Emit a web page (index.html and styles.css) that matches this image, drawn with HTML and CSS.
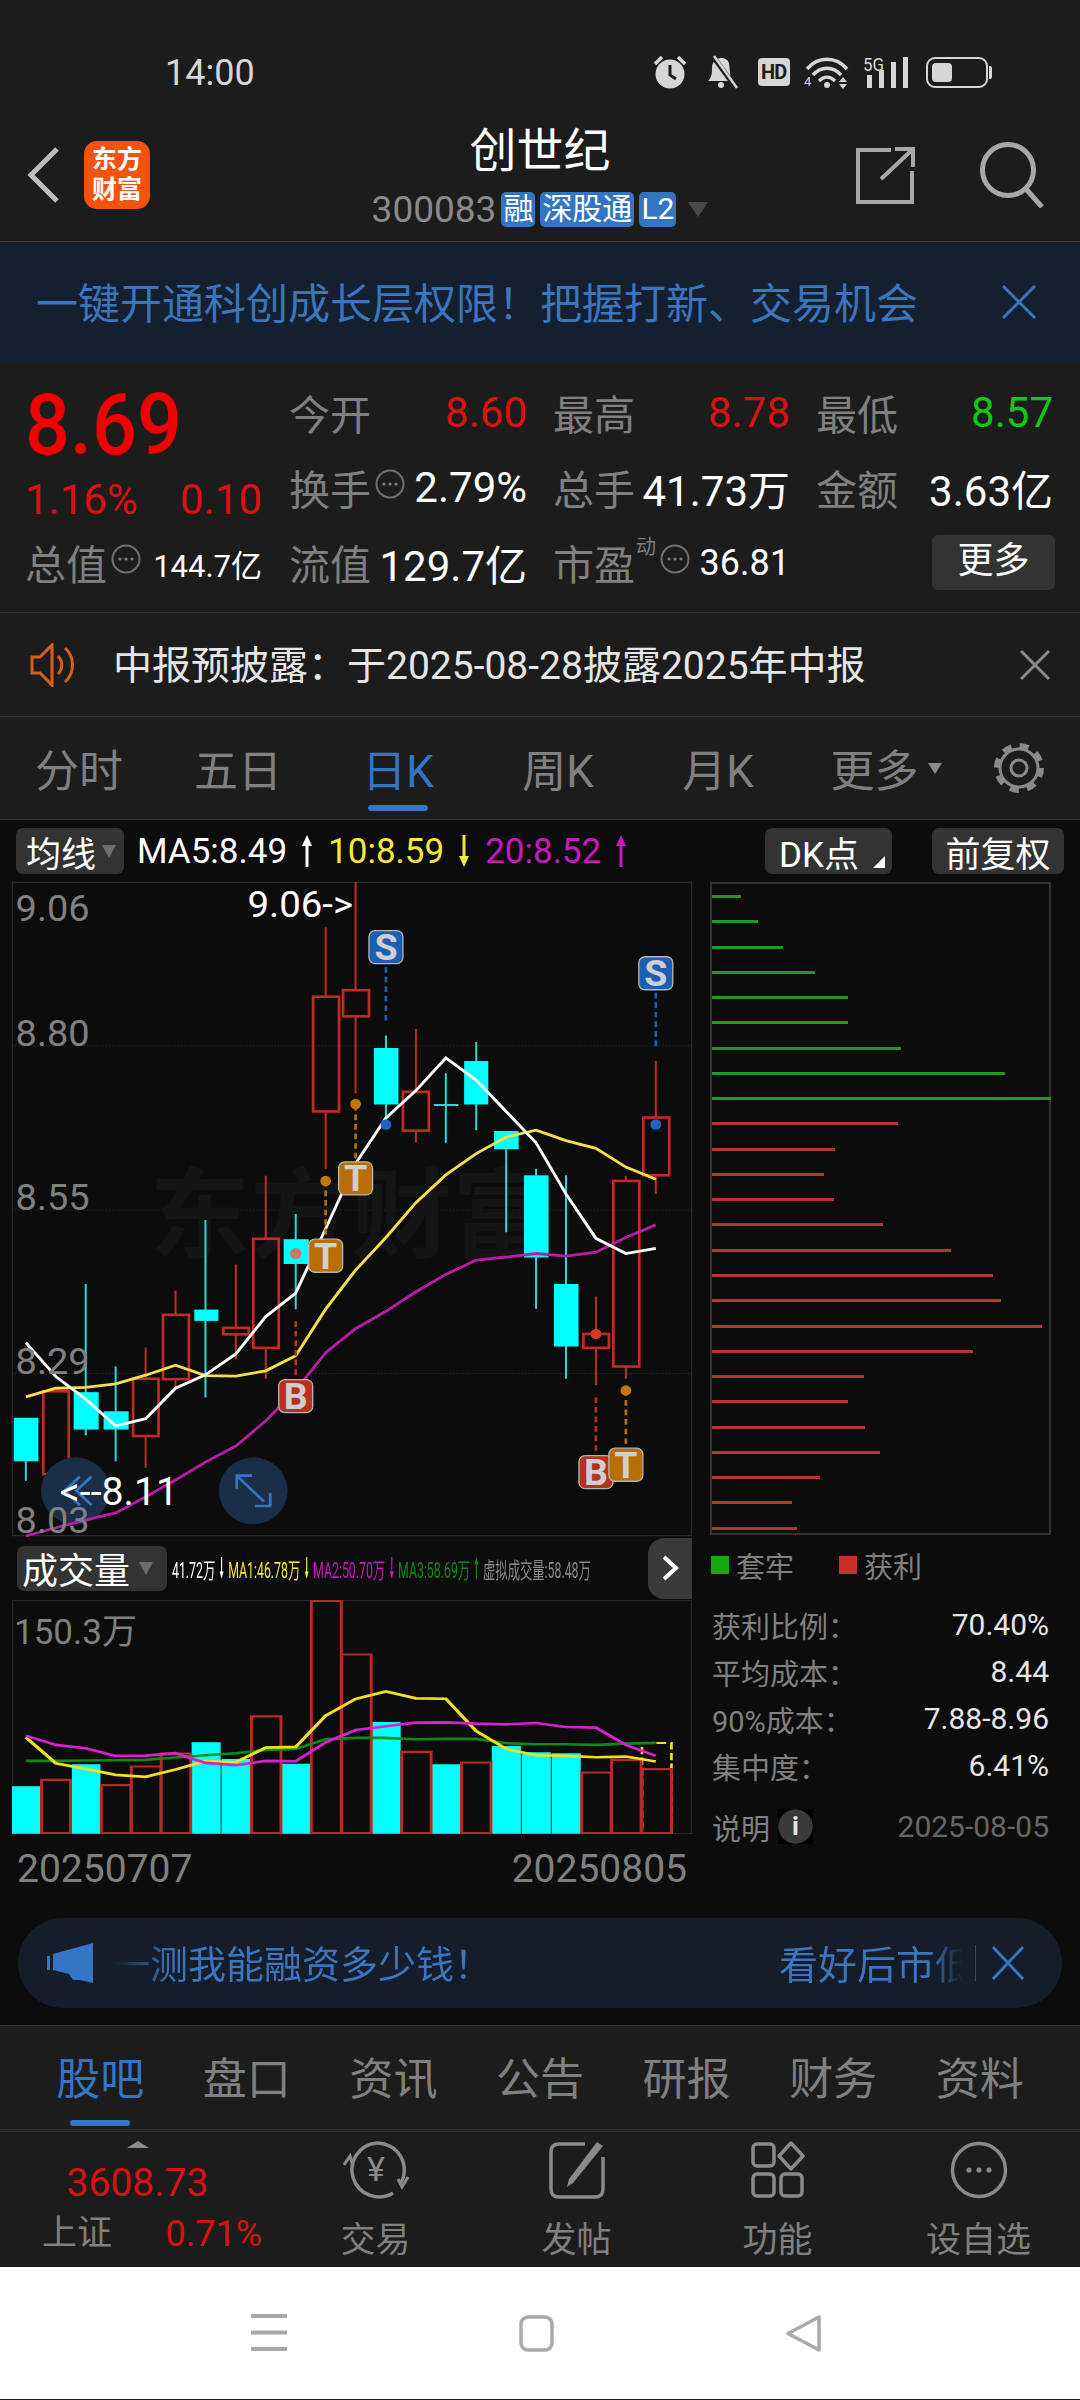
FILE: index.html
```html
<!DOCTYPE html>
<html lang="zh-CN">
<head>
    <meta charset="utf-8">
    <title>创世纪 300083</title>
    <link rel="stylesheet" href="styles.css">
</head>
<body>
    <svg class="defs" width="0" height="0">
        <symbol id="dots" viewBox="0 0 30 30">
            <circle cx="15" cy="15" r="13.5" fill="none" stroke="#707070" stroke-width="2"/>
            <circle cx="9" cy="15" r="1.6" fill="#808080"/>
            <circle cx="15" cy="15" r="1.6" fill="#808080"/>
            <circle cx="21" cy="15" r="1.6" fill="#808080"/>
        </symbol>
        <symbol id="arr-up" viewBox="0 0 12 32">
            <path d="M6 32V6" stroke="currentColor" stroke-width="3"/>
            <path d="M6 0L1 11H11Z" fill="currentColor"/>
        </symbol>
        <symbol id="arr-down" viewBox="0 0 12 32">
            <path d="M6 0V26" stroke="currentColor" stroke-width="3"/>
            <path d="M6 32L1 21H11Z" fill="currentColor"/>
        </symbol>
    </svg>

    <!-- 状态栏 -->
    <div class="status">
        <span class="clock">14:00</span>
        <div class="status-icons">
            <svg class="s-alarm" width="32" height="34" viewBox="0 0 32 34">
                <circle cx="16" cy="19" r="14.5" fill="#d6d6d6"/>
                <path d="M16 10V20L22 24" fill="none" stroke="#1c1c1c" stroke-width="3"/>
                <path d="M1 9L8 2M31 9L24 2" stroke="#d6d6d6" stroke-width="3.5"/>
            </svg>
            <svg class="s-bell" width="32" height="34" viewBox="0 0 32 34">
                <path d="M2 26C6 22 6 18 6 13C6 7 10 3 15 3C19 3 22 5 23 8L25 26Z" fill="#d6d6d6"/>
                <circle cx="15" cy="30" r="3" fill="#d6d6d6"/>
                <path d="M6 0L30 33" stroke="#1c1c1c" stroke-width="5"/>
                <path d="M8 1L31 33" stroke="#d6d6d6" stroke-width="2.5"/>
            </svg>
            <div class="s-hd">HD</div>
            <svg class="s-wifi" width="46" height="34" viewBox="0 0 46 34">
                <path d="M3 14C14 1 32 1 43 14M9 20C17 11 29 11 37 20M15 26C20 21 26 21 31 26" fill="none" stroke="#d6d6d6" stroke-width="3.5"/>
                <circle cx="23" cy="30" r="3" fill="#d6d6d6"/>
                <path d="M35 27L39 22L43 27ZM35 29L39 34L43 29Z" fill="#d6d6d6"/>
                <text x="0" y="31" class="s-tiny s-four">4</text>
            </svg>
            <svg class="s-signal" width="47" height="34" viewBox="0 0 47 34">
                <text x="0" y="16" class="s-tiny" textLength="21" lengthAdjust="spacingAndGlyphs">5G</text>
                <path d="M4 20H9V33H4ZM16 15H21V33H16ZM28 7H33V33H28ZM40 2H45V33H40Z" fill="#d6d6d6"/>
            </svg>
            <div class="s-batt"><i></i></div>
        </div>
    </div>

    <!-- 顶部标题 -->
    <div class="header">
        <div class="h-left">
            <svg width="32" height="56" viewBox="0 0 32 56">
                <path d="M30 2L4 28L30 54" fill="none" stroke="#bdbdbd" stroke-width="5"/>
            </svg>
            <div class="logo">东方<br>财富</div>
        </div>
        <div class="h-mid">
            <div class="h-title">创世纪</div>
            <div class="h-sub">
                <span class="h-code">300083</span>
                <span class="tag">融</span>
                <span class="tag">深股通</span>
                <span class="tag">L2</span>
                <i class="h-tri"></i>
            </div>
        </div>
        <div class="h-right">
            <svg width="60" height="60" viewBox="0 0 60 60">
                <path d="M36 5H3V57H57V26" fill="none" stroke="#a8a8a8" stroke-width="4"/>
                <path d="M26 34L57 5M40 4H58V22" fill="none" stroke="#a8a8a8" stroke-width="4"/>
            </svg>
            <svg width="64" height="66" viewBox="0 0 64 66">
                <circle cx="28" cy="28" r="25.5" fill="none" stroke="#a8a8a8" stroke-width="5"/>
                <path d="M46 47L62 65" stroke="#a8a8a8" stroke-width="5"/>
            </svg>
        </div>
    </div>

    <div class="banner">
        <span class="banner-text">一键开通科创成长层权限！把握打新、交易机会</span>
        <svg width="36" height="34" viewBox="0 0 36 34">
            <path d="M2 1L34 33M34 1L2 33" stroke="#3a75bd" stroke-width="3"/>
        </svg>
    </div>

    <!-- 行情数据 -->
    <div class="quote">
        <div class="q-left">
            <div class="q-price">8.69</div>
            <div class="q-change"><span>1.16%</span><span>0.10</span></div>
            <div class="q-total">
                <span class="lbl">总值</span>
                <svg class="dot-ic"><use href="#dots"/></svg>
                <span class="val-s">144.7亿</span>
            </div>
        </div>
        <div class="q-grid">
            <div class="cell"><span class="lbl">今开</span><span class="val red">8.60</span></div>
            <div class="cell"><span class="lbl">最高</span><span class="val red">8.78</span></div>
            <div class="cell"><span class="lbl">最低</span><span class="val green">8.57</span></div>
            <div class="cell"><span class="lbl">换手</span><svg class="dot-ic"><use href="#dots"/></svg><span class="val push">2.79%</span></div>
            <div class="cell"><span class="lbl">总手</span><span class="val">41.73万</span></div>
            <div class="cell"><span class="lbl">金额</span><span class="val">3.63亿</span></div>
            <div class="cell"><span class="lbl">流值</span><span class="val">129.7亿</span></div>
            <div class="cell"><span class="lbl">市盈</span><sup class="q-dyn">动</sup><svg class="dot-ic"><use href="#dots"/></svg><span class="val val-pe push">36.81</span></div>
            <div class="cell cell-end"><span class="more-btn">更多</span></div>
        </div>
    </div>

    <div class="notice">
        <svg width="50" height="44" viewBox="0 0 50 44">
            <path d="M2 14H10L22 2V42L10 30H2Z" fill="none" stroke="#d95d1b" stroke-width="3"/>
            <path d="M28 13C33 18 33 26 28 31M35 5C45 14 45 30 35 39" fill="none" stroke="#d95d1b" stroke-width="3"/>
        </svg>
        <span class="notice-text">中报预披露：于2025-08-28披露2025年中报</span>
        <svg class="notice-x" width="30" height="30" viewBox="0 0 30 30">
            <path d="M1 1L29 29M29 1L1 29" stroke="#8a8a8a" stroke-width="3"/>
        </svg>
    </div>

    <div class="tabs">
        <div class="tab">分时</div>
        <div class="tab">五日</div>
        <div class="tab on">日K</div>
        <div class="tab">周K</div>
        <div class="tab">月K</div>
        <div class="tab tab-more">更多<i class="tab-tri"></i></div>
        <div class="tab">
            <svg width="54" height="54" viewBox="0 0 54 54">
                <circle cx="27" cy="27" r="22" fill="none" stroke="#8a8a8a" stroke-width="6" stroke-dasharray="9 8.28"/>
                <circle cx="27" cy="27" r="19" fill="none" stroke="#8a8a8a" stroke-width="3"/>
                <circle cx="27" cy="27" r="8" fill="none" stroke="#8a8a8a" stroke-width="3"/>
            </svg>
        </div>
    </div>

    <!-- K线区域 -->
    <div class="board">
        <div class="ma-row">
            <div class="chip chip-ma">均线<i class="chip-tri"></i></div>
            <span class="ma-item">MA5:8.49<svg class="arr"><use href="#arr-up"/></svg></span>
            <span class="ma-item yellow">10:8.59<svg class="arr"><use href="#arr-down"/></svg></span>
            <span class="ma-item magenta">20:8.52<svg class="arr"><use href="#arr-up"/></svg></span>
            <div class="chip chip-dk">DK点<i class="chip-corner"></i></div>
            <div class="chip chip-fq">前复权</div>
        </div>

        <div class="columns">
            <div class="col-left">
                <svg class="kline" viewBox="28 32 1522 1505" preserveAspectRatio="none">
                    <rect class="frame" x="29" y="33" width="1520" height="1503"/>
                    <path class="grid-line" d="M28 409H1550M28 787H1550M28 1163H1550"/>
                    <text class="watermark" x="335" y="880">东方财富</text>

                    <path class="wick-c" d="M59 1365V1410M193 957V1305M260 1147V1365M461 810V1218M663 796V1015M865 385V590M999 472V632M1067 400V603M1134 647V838M1201 692V1014M1268 707V1175M972 545H1027"/>
                    <path class="wick-r" d="M126 1395V1422M327 1103V1175M327 1307V1380M394 972V1028M394 1176V1195M529 912V1058M529 1073V1130M596 708V853M596 1104V1175M730 136V296M730 560V692M797 32V281M797 341V518M932 370V515M932 604V632M1335 986V1072M1335 1104V1190M1402 708V720M1402 1147V1175M1469 444V574M1469 707V750"/>

                    <rect class="c-fall" x="32" y="1265" width="55" height="100"/>
                    <rect class="c-fall" x="166" y="1206" width="56" height="86"/>
                    <rect class="c-fall" x="233" y="1250" width="56" height="42"/>
                    <rect class="c-fall" x="436" y="1016" width="54" height="26"/>
                    <rect class="c-fall" x="636" y="854" width="56" height="57"/>
                    <rect class="c-fall" x="838" y="414" width="55" height="130"/>
                    <rect class="c-fall" x="1040" y="444" width="54" height="100"/>
                    <rect class="c-fall" x="1107" y="605" width="55" height="42"/>
                    <rect class="c-fall" x="1174" y="707" width="55" height="189"/>
                    <rect class="c-fall" x="1241" y="957" width="55" height="144"/>

                    <rect class="c-rise" x="98" y="1204" width="57" height="191"/>
                    <rect class="c-rise" x="299" y="1175" width="57" height="132"/>
                    <rect class="c-rise" x="366" y="1028" width="58" height="148"/>
                    <rect class="c-rise" x="501" y="1058" width="57" height="15"/>
                    <rect class="c-rise" x="568" y="853" width="57" height="251"/>
                    <rect class="c-rise" x="702" y="296" width="58" height="264"/>
                    <rect class="c-rise" x="769" y="281" width="58" height="60"/>
                    <rect class="c-rise" x="903" y="515" width="58" height="89"/>
                    <rect class="c-rise" x="1307" y="1072" width="57" height="32"/>
                    <rect class="c-rise" x="1374" y="720" width="58" height="427"/>
                    <rect class="c-rise" x="1441" y="574" width="58" height="133"/>

                    <!-- 悬浮按钮 -->
                    <circle class="fab" cx="170" cy="1433" r="77"/>
                    <path class="fab-ic" d="M180 1400L146 1433L180 1466M206 1400L172 1433L206 1466"/>
                    <circle class="fab" cx="568" cy="1433" r="77"/>
                    <path class="fab-ic" d="M531 1398L592 1458M531 1428V1398H565M606 1438V1468H572"/>

                    <polyline class="ln ln-m" points="59,1537 126,1518 193,1500 260,1484 327,1447 394,1408 461,1367 529,1330 596,1272 663,1202 730,1115 797,1060 865,1020 932,975 999,935 1067,902 1134,895 1201,887 1268,893 1335,884 1402,850 1469,821"/>
                    <polyline class="ln ln-y" points="59,1217 126,1197 193,1195 260,1187 327,1167 394,1144 461,1168 529,1169 596,1157 663,1122 730,1015 797,925 865,850 932,770 999,706 1067,657 1134,619 1201,603 1268,627 1335,645 1402,688 1469,716"/>
                    <polyline class="ln ln-w" points="59,1092 126,1170 193,1222 260,1284 327,1267 394,1197 461,1166 529,1118 596,1032 663,978 730,830 797,680 865,575 932,512 999,437 1067,488 1134,560 1201,632 1268,750 1335,852 1402,887 1469,875"/>

                    <text class="axis" x="36" y="122">9.06</text>
                    <text class="axis" x="36" y="409">8.80</text>
                    <text class="axis" x="36" y="786">8.55</text>
                    <text class="axis" x="36" y="1164">8.29</text>
                    <text class="axis" x="36" y="1530">8.03</text>
                    <text class="peak" x="555" y="112">9.06-&gt;</text>
                    <text class="low" x="135" y="1465">&lt;--8.11</text>

                    <!-- 买卖点 -->
                    <path class="dash dash-b" d="M865 228V355M1469 287V415"/>
                    <path class="dash dash-o" d="M797 545V672M730 720V850M1402 1202V1330"/>
                    <path class="dash dash-r" d="M663 1043V1170M1335 1218V1345"/>
                    <circle class="pt-b" cx="865" cy="590" r="12"/>
                    <circle class="pt-b" cx="1469" cy="590" r="12"/>
                    <circle class="pt-o" cx="797" cy="543" r="12"/>
                    <circle class="pt-o" cx="730" cy="720" r="12"/>
                    <circle class="pt-o" cx="1402" cy="1202" r="12"/>
                    <circle class="pt-s" cx="663" cy="887" r="13"/>
                    <circle class="pt-r" cx="1335" cy="1072" r="12"/>

                    <rect class="bd bd-s" x="827" y="144" width="76" height="76" rx="14"/>
                    <text class="bd-t" x="865" y="212">S</text>
                    <rect class="bd bd-s" x="1431" y="204" width="76" height="76" rx="14"/>
                    <text class="bd-t" x="1469" y="272">S</text>
                    <rect class="bd bd-t-o" x="759" y="676" width="76" height="76" rx="14"/>
                    <text class="bd-t" x="797" y="744">T</text>
                    <rect class="bd bd-t-o" x="692" y="854" width="76" height="76" rx="14"/>
                    <text class="bd-t" x="730" y="922">T</text>
                    <rect class="bd bd-b-r" x="625" y="1177" width="76" height="76" rx="14"/>
                    <text class="bd-t" x="663" y="1245">B</text>
                    <rect class="bd bd-b-r" x="1297" y="1352" width="76" height="76" rx="14"/>
                    <text class="bd-t" x="1335" y="1420">B</text>
                    <rect class="bd bd-t-o" x="1364" y="1335" width="76" height="76" rx="14"/>
                    <text class="bd-t" x="1402" y="1403">T</text>
                </svg>

                <div class="vol-row">
                    <div class="chip chip-vol">成交量<i class="chip-tri"></i></div>
                    <div class="vol-legend">
                        <div class="vol-inner">
                            <span>41.72万</span><svg class="arr-s"><use href="#arr-down"/></svg>
                            <span class="yellow">MA1:46.78万</span><svg class="arr-s yellow"><use href="#arr-down"/></svg>
                            <span class="magenta">MA2:50.70万</span><svg class="arr-s magenta"><use href="#arr-down"/></svg>
                            <span class="dk-green">MA3:58.69万</span><svg class="arr-s dk-green"><use href="#arr-up"/></svg>
                            <span class="gray">虚拟成交量:58.48万</span>
                        </div>
                    </div>
                    <div class="vol-next">
                        <svg width="18" height="26" viewBox="0 0 18 26">
                            <path d="M3 2L15 13L3 24" fill="none" stroke="#fff" stroke-width="4"/>
                        </svg>
                    </div>
                </div>

                <div class="vol-box">
                    <svg class="vol" viewBox="28 212 1522 704" preserveAspectRatio="none">
                        <rect class="frame" x="29" y="213" width="1520" height="702"/>
                        <path class="vol-fall" d="M28 772H91V915H28ZM162 706H226V915H162ZM430 640H495V915H430ZM497 690H561V915H497ZM632 705H695V915H632ZM834 579H898V915H834ZM968 706H1032V915H968ZM1102 651H1167V915H1102ZM1169 670H1234V915H1169ZM1236 673H1301V915H1236Z"/>
                        <rect class="vol-virt" x="1438" y="642" width="66" height="271"/>
                        <path class="vol-rise" d="M94 753H159V913H94ZM228 769H294V913H228ZM295 713H361V913H295ZM362 674H428V913H362ZM564 562H630V913H564ZM698 215H765V913H698ZM766 376H832V913H766ZM900 669H966V913H900ZM1034 701H1100V913H1034ZM1303 731H1369V913H1303ZM1370 693H1436V913H1370ZM1438 721H1504V913H1438Z"/>
                        <polyline class="vl vl-g" points="59,696 126,696 193,695 260,694 327,693 394,686 461,679 529,673 596,663 663,660 730,631 797,627 865,627 932,631 999,630 1067,630 1134,643 1201,646 1268,646 1335,648 1402,644 1469,642"/>
                        <polyline class="vl vl-y" points="59,625 126,703 193,720 260,738 327,744 394,722 461,697 529,700 596,656 663,654 730,560 797,510 865,487 932,508 999,509 1067,606 1134,660 1201,679 1268,681 1335,685 1402,683 1469,698"/>
                        <polyline class="vl vl-m" points="59,620 126,648 193,658 260,681 327,680 394,673 461,702 529,709 596,696 663,697 730,640 797,603 865,592 932,581 999,580 1067,584 1134,586 1201,582 1268,594 1335,596 1402,648 1469,681"/>
                    </svg>
                    <span class="vol-max">150.3万</span>
                </div>

                <div class="dates"><span>20250707</span><span>20250805</span></div>
            </div>

            <div class="col-right">
                <div class="depth">
                    <i class="g" style="width:29px"></i>
                    <i class="g" style="width:46px"></i>
                    <i class="g" style="width:71px"></i>
                    <i class="g" style="width:103px"></i>
                    <i class="g" style="width:136px"></i>
                    <i class="g" style="width:136px"></i>
                    <i class="g" style="width:189px"></i>
                    <i class="g" style="width:293px"></i>
                    <i class="g" style="width:339px"></i>
                    <i class="r" style="width:186px"></i>
                    <i class="r" style="width:123px"></i>
                    <i class="r" style="width:112px"></i>
                    <i class="r" style="width:122px"></i>
                    <i class="r" style="width:171px"></i>
                    <i class="r" style="width:239px"></i>
                    <i class="r" style="width:281px"></i>
                    <i class="r" style="width:289px"></i>
                    <i class="r" style="width:330px"></i>
                    <i class="r" style="width:261px"></i>
                    <i class="r" style="width:152px"></i>
                    <i class="r" style="width:136px"></i>
                    <i class="r" style="width:153px"></i>
                    <i class="r" style="width:168px"></i>
                    <i class="r" style="width:108px"></i>
                    <i class="r" style="width:80px"></i>
                    <i class="r" style="width:85px"></i>
                </div>
                <div class="legend">
                    <i class="sq sq-g"></i><span>套牢</span>
                    <i class="sq sq-r"></i><span>获利</span>
                </div>
                <div class="stat"><span>获利比例：</span><b>70.40%</b></div>
                <div class="stat"><span>平均成本：</span><b>8.44</b></div>
                <div class="stat"><span>90%成本：</span><b>7.88-8.96</b></div>
                <div class="stat"><span>集中度：</span><b>6.41%</b></div>
                <div class="stat stat-foot">
                    <span>说明</span><span class="info">i</span>
                    <em>2025-08-05</em>
                </div>
            </div>
        </div>

        <div class="ad">
            <svg width="46" height="40" viewBox="0 0 46 40">
                <path d="M0 13H3V27H0ZM6 11L46 0V40L33 37L26 37L22 31L6 27Z" fill="#3476c4"/>
            </svg>
            <span class="ad-left">一测我能融资多少钱！</span>
            <span class="ad-right">看好后市低</span>
            <i class="ad-sep"></i>
            <svg width="34" height="34" viewBox="0 0 34 34">
                <path d="M2 1L32 33M32 1L2 33" stroke="#3a75bd" stroke-width="3"/>
            </svg>
        </div>
    </div>

    <div class="subtabs">
        <div class="subtab on">股吧</div>
        <div class="subtab">盘口</div>
        <div class="subtab">资讯</div>
        <div class="subtab">公告</div>
        <div class="subtab">研报</div>
        <div class="subtab">财务</div>
        <div class="subtab">资料</div>
    </div>

    <div class="dock">
        <div class="index">
            <i class="index-tri"></i>
            <div class="index-val">3608.73</div>
            <div class="index-row"><span>上证</span><b>0.71%</b></div>
        </div>
        <div class="dock-item">
            <svg width="66" height="58" viewBox="0 0 66 58">
                <path d="M34 2A27 27 0 1 0 50 52" fill="none" stroke="#8a8a8a" stroke-width="3.5"/>
                <path d="M34 2A27 27 0 0 1 58 42" fill="none" stroke="#8a8a8a" stroke-width="3.5"/>
                <path d="M1 24L7 15L10 25M65 36L59 46L55 38" fill="none" stroke="#8a8a8a" stroke-width="3"/>
                <text x="33" y="40" class="yen">¥</text>
            </svg>
            <span>交易</span>
        </div>
        <div class="dock-item">
            <svg width="56" height="58" viewBox="0 0 56 58">
                <path d="M36 3H10Q2 3 2 11V48Q2 56 10 56H46Q54 56 54 48V16" fill="none" stroke="#8a8a8a" stroke-width="3.5"/>
                <path d="M20 38L48 1L54 5L24 42L18 46Z" fill="#8a8a8a"/>
            </svg>
            <span>发帖</span>
        </div>
        <div class="dock-item">
            <svg width="54" height="58" viewBox="0 0 54 58">
                <rect x="2" y="3" width="21" height="22" rx="4" fill="none" stroke="#8a8a8a" stroke-width="3.5"/>
                <path d="M40 2L52 15L40 28L28 15Z" fill="none" stroke="#8a8a8a" stroke-width="3.5" stroke-linejoin="round"/>
                <rect x="2" y="33" width="21" height="22" rx="4" fill="none" stroke="#8a8a8a" stroke-width="3.5"/>
                <rect x="30" y="33" width="21" height="22" rx="4" fill="none" stroke="#8a8a8a" stroke-width="3.5"/>
            </svg>
            <span>功能</span>
        </div>
        <div class="dock-item">
            <svg width="58" height="58" viewBox="0 0 58 58">
                <circle cx="29" cy="29" r="26.5" fill="none" stroke="#8a8a8a" stroke-width="3.5"/>
                <circle cx="19" cy="29" r="2.6" fill="#8a8a8a"/>
                <circle cx="29" cy="29" r="2.6" fill="#8a8a8a"/>
                <circle cx="39" cy="29" r="2.6" fill="#8a8a8a"/>
            </svg>
            <span>设自选</span>
        </div>
    </div>

    <div class="navbar">
        <svg width="36" height="38" viewBox="0 0 36 38">
            <path d="M0 2H36M0 18.500H36M0 35H36" stroke="#a9a9a9" stroke-width="4"/>
        </svg>
        <svg width="35" height="37" viewBox="0 0 35 37">
            <rect x="2" y="2" width="31" height="33" rx="7" fill="none" stroke="#a9a9a9" stroke-width="3.5"/>
        </svg>
        <svg width="35" height="37" viewBox="0 0 35 37">
            <path d="M33 2V35L2 18.500Z" fill="none" stroke="#a9a9a9" stroke-width="3.5" stroke-linejoin="round"/>
        </svg>
    </div>
</body>
</html>
```

FILE: styles.css
```css
* {
    box-sizing: border-box;
}

body {
    margin: 0;
    width: 1080px;
    height: 2400px;
    overflow: hidden;
    background: #1c1c1c;
    color: #fff;
    font-family: Roboto, "Noto Sans CJK SC", sans-serif;
}

i {
    display: block;
    font-style: normal;
}

.defs {
    position: absolute;
}

.red { color: #d81212; }
.green { color: #12c912; }
.yellow { color: #f2e93a; }
.magenta { color: #c918c0; }
.dk-green { color: #0f8a14; }
.gray { color: #8a8a8a; }

/* 状态栏 */
.status {
    height: 110px;
    display: flex;
    align-items: flex-start;
    padding: 55px 0 0 165px;
}

.clock {
    font-size: 36px;
    line-height: 36px;
    color: #d6d6d6;
}

.status-icons {
    display: flex;
    align-items: center;
    margin-left: 399px;
    height: 34px;
}

.s-bell { margin-left: 20px; }
.s-wifi { margin-left: 14px; }

.s-signal {
    margin-left: 13px;
    overflow: visible;
}

.s-hd {
    margin-left: 20px;
    width: 32px;
    height: 28px;
    border-radius: 4px;
    background: #d6d6d6;
    color: #1c1c1c;
    font-size: 20px;
    font-weight: 700;
    line-height: 28px;
    letter-spacing: -1px;
    text-align: center;
}

.s-tiny {
    font-size: 18px;
    fill: #d6d6d6;
}

.s-four {
    font-size: 13px;
}

.s-batt {
    position: relative;
    margin-left: 16px;
    width: 62px;
    height: 31px;
    border: 2px solid #d6d6d6;
    border-radius: 9px;
    padding: 4px;
}

.s-batt i {
    width: 20px;
    height: 100%;
    background: #d6d6d6;
    border-radius: 4px;
}

.s-batt::after {
    content: "";
    position: absolute;
    right: -6px;
    top: 7px;
    width: 3px;
    height: 13px;
    border-radius: 0 2px 2px 0;
    background: #d6d6d6;
}

/* 顶部标题 */
.header {
    height: 132px;
    border-bottom: 1px solid #3a3a3a;
    display: grid;
    grid-template-columns: 1fr auto 1fr;
}

.h-left {
    display: flex;
    align-items: center;
    gap: 25px;
    padding: 0 0 2px 27px;
}

.logo {
    width: 66px;
    height: 68px;
    border-radius: 13px;
    background: #f4530f;
    font-size: 25px;
    font-weight: 700;
    line-height: 30px;
    text-align: center;
    padding-top: 4px;
}

.h-mid {
    display: flex;
    flex-direction: column;
    align-items: center;
    padding-top: 11px;
}

.h-title {
    font-size: 47px;
    line-height: 60px;
}

.h-sub {
    display: flex;
    align-items: center;
    margin-top: 10px;
    height: 36px;
}

.h-code {
    font-size: 37px;
    color: #8a8a8a;
}

.tag {
    margin-left: 5px;
    height: 35px;
    padding: 0 2px;
    border-radius: 5px;
    background: #3276c3;
    font-size: 30px;
    line-height: 34px;
}

.h-tri {
    margin-left: 12px;
    border-left: 10px solid transparent;
    border-right: 10px solid transparent;
    border-top: 15px solid #4a4a4a;
}

.h-right {
    display: flex;
    align-items: center;
    justify-content: flex-end;
    gap: 65px;
    padding: 0 36px 2px 0;
}

.banner {
    height: 120px;
    background: #14202f;
    color: #3a75bd;
    font-size: 42px;
    display: flex;
    align-items: center;
    padding: 0 43px 0 36px;
    justify-content: space-between;
}

.banner-text {
    margin-top: -4px;
}

/* 行情数据 */
.quote {
    height: 250px;
    display: flex;
}

.q-left {
    width: 289px;
    padding: 13px 27px 0 25px;
}

.q-price {
    height: 100px;
    font-size: 86px;
    font-weight: 500;
    line-height: 100px;
    color: #f00000;
    transform: scaleX(.92);
    transform-origin: left center;
}

.q-change {
    height: 50px;
    display: flex;
    justify-content: space-between;
    font-size: 42px;
    line-height: 50px;
    color: #d81212;
}

.q-total {
    height: 76px;
    display: flex;
    align-items: center;
}

.lbl {
    margin-top: -2px;
    font-size: 41px;
    color: #808080;
    white-space: nowrap;
}

.dot-ic {
    width: 30px;
    height: 30px;
    margin: -8px 0 0 4px;
    flex: none;
}

.val-s {
    margin-left: auto;
    font-size: 31px;
}

.q-grid {
    padding-top: 13px;
    display: grid;
    grid-template-columns: 238px 237px 237px;
    grid-auto-rows: 75px;
    column-gap: 26px;
}

.cell {
    display: flex;
    align-items: center;
    justify-content: space-between;
}

.cell-end {
    justify-content: flex-end;
}

.val {
    font-size: 42px;
    white-space: nowrap;
}

.val-pe {
    font-size: 36px;
}

.push {
    margin-left: auto;
}

.q-dyn {
    font-size: 20px;
    color: #808080;
    margin: -32px 0 0 1px;
    line-height: 24px;
}

.more-btn {
    width: 123px;
    height: 55px;
    margin-right: -2px;
    border-radius: 6px;
    background: #333;
    font-size: 36px;
    line-height: 52px;
    text-align: center;
}

.notice {
    height: 105px;
    border-top: 1px solid #2e2e2e;
    border-bottom: 1px solid #333;
    display: flex;
    align-items: center;
    padding: 0 30px;
}

.notice-text {
    margin: -6px 0 0 33px;
    font-size: 39px;
    color: #e6e6e6;
}

.notice-x {
    margin-left: auto;
}

/* 周期切换 */
.tabs {
    height: 103px;
    display: grid;
    grid-template-columns: 158px repeat(5, 160px) 1fr;
    border-bottom: 1px solid #333;
}

.tab {
    position: relative;
    display: flex;
    align-items: center;
    justify-content: center;
    font-size: 44px;
    color: #808080;
}

.tab.on {
    color: #3476c4;
}

.tab.on::after {
    content: "";
    position: absolute;
    left: 50%;
    bottom: 8px;
    width: 60px;
    height: 6px;
    margin-left: -30px;
    border-radius: 3px;
    background: #3476c4;
}

.tab-more {
    padding-left: 16px;
}

.tab-tri {
    margin-left: 9px;
    border-left: 7px solid transparent;
    border-right: 7px solid transparent;
    border-top: 11px solid #8a8a8a;
}

/* K线区域 */
.board {
    height: 1205px;
    background: #0c0c0c;
}

.ma-row {
    height: 62px;
    display: flex;
    align-items: center;
    padding: 0 16px;
}

.chip {
    display: flex;
    align-items: center;
    height: 46px;
    border-radius: 7px;
    background: #333;
    font-size: 35px;
    white-space: nowrap;
}

.chip-ma {
    width: 108px;
    padding-left: 10px;
    margin-right: 13px;
}

.chip-tri {
    margin-left: 6px;
    border-left: 7px solid transparent;
    border-right: 7px solid transparent;
    border-top: 13px solid #6e6e6e;
}

.chip-dk {
    position: relative;
    width: 127px;
    margin-left: auto;
    padding-left: 14px;
}

.chip-corner {
    position: absolute;
    right: 7px;
    bottom: 6px;
    border-left: 12px solid transparent;
    border-bottom: 12px solid #fff;
}

.chip-fq {
    width: 132px;
    margin-left: 40px;
    justify-content: center;
}

.ma-item {
    display: flex;
    align-items: center;
    font-size: 35px;
    margin-right: 15px;
    white-space: nowrap;
}

.arr {
    width: 12px;
    height: 34px;
    margin-left: 14px;
}

.columns {
    display: flex;
    height: 1020px;
}

.col-left {
    width: 680px;
    margin-left: 12px;
}

.kline {
    display: block;
    width: 680px;
    height: 654px;
    overflow: visible;
}

.frame {
    fill: none;
    stroke: #2a2a2a;
    stroke-width: 3;
}

.grid-line {
    stroke: #2f2f2f;
    stroke-width: 2;
    stroke-dasharray: 3 4;
}

.watermark {
    font-size: 226px;
    font-weight: 700;
    fill: #141414;
}

.wick-c {
    stroke: #2ad8d8;
    stroke-width: 4.500;
}

.wick-r {
    stroke: #c22a24;
    stroke-width: 4.500;
}

.c-fall {
    fill: #00ffff;
}

.c-rise {
    fill: none;
    stroke: #c22a24;
    stroke-width: 6;
}

.ln {
    fill: none;
    stroke-width: 6.500;
}

.ln-w { stroke: #fff; }
.ln-y { stroke: #f3e04a; }
.ln-m { stroke: #b81ca8; }

.axis {
    font-size: 85px;
    fill: #808080;
}

.peak {
    font-size: 86px;
    fill: #fff;
}

.low {
    font-size: 88px;
    fill: #fff;
}

.dash {
    fill: none;
    stroke-width: 6;
    stroke-dasharray: 13 9;
}

.dash-b { stroke: #1b5fb5; }
.dash-o { stroke: #b86e05; }
.dash-r { stroke: #b8301f; }

.pt-b { fill: #1b63c4; }
.pt-o { fill: #c47605; }
.pt-r { fill: #d8362a; }
.pt-s { fill: #c47a6c; }

.bd {
    stroke: #b4b4b4;
    stroke-width: 3;
}

.bd-s { fill: #1b5fb5; }
.bd-t-o { fill: #b86e05; }
.bd-b-r { fill: #b8301f; }

.bd-t {
    font-size: 84px;
    font-weight: 700;
    fill: #cfcfcf;
    text-anchor: middle;
}

.fab {
    fill: #1a2e47;
}

.fab-ic {
    fill: none;
    stroke: #3476c4;
    stroke-width: 6;
}

.vol-row {
    height: 64px;
    display: flex;
    align-items: center;
}

.chip-vol {
    width: 150px;
    height: 45px;
    margin-left: 5px;
    padding-left: 5px;
    font-size: 36px;
}

.chip-vol .chip-tri {
    margin-left: 9px;
}

.vol-legend {
    flex: 1;
    min-width: 0;
    padding-left: 5px;
}

.vol-inner {
    display: flex;
    align-items: center;
    width: 760px;
    font-size: 22px;
    white-space: nowrap;
    transform: scaleX(.56);
    transform-origin: left center;
}

.arr-s {
    width: 9px;
    height: 22px;
    margin: 0 7px;
}

.vol-next {
    width: 44px;
    height: 61px;
    display: flex;
    align-items: center;
    justify-content: center;
    border-radius: 16px 0 0 16px;
    background: #3a3a3a;
}

.vol-box {
    position: relative;
    height: 234px;
}

.vol {
    display: block;
    width: 680px;
    height: 234px;
}

.vol-fall {
    fill: #00ffff;
}

.vol-rise {
    fill: none;
    stroke: #b82a24;
    stroke-width: 6.500;
}

.vol-virt {
    fill: none;
    stroke: #f2e020;
    stroke-width: 6;
    stroke-dasharray: 22 10;
}

.vl {
    fill: none;
    stroke-width: 8;
}

.vl-g { stroke: #0f8a14; }
.vl-m { stroke: #d91fd0; }
.vl-y { stroke: #f2e020; }

.vol-max {
    position: absolute;
    left: 2px;
    top: 3px;
    font-size: 35px;
    color: #808080;
}

.dates {
    height: 68px;
    display: flex;
    align-items: center;
    justify-content: space-between;
    padding: 2px 5px 0 5px;
    font-size: 39px;
    color: #808080;
}

.col-right {
    width: 341px;
    margin-left: 18px;
}

.depth {
    height: 653px;
    border: 2px solid #333;
    padding: 11px 0 3px 0;
    display: flex;
    flex-direction: column;
    justify-content: space-between;
}

.depth i {
    height: 3px;
}

.depth .g { background: #1f9a1f; }
.depth .r { background: #b83232; }

.legend {
    height: 60px;
    display: flex;
    align-items: center;
    font-size: 29px;
    color: #808080;
    padding-left: 1px;
}

.legend span {
    margin-left: 7px;
}

.sq {
    width: 18px;
    height: 18px;
}

.sq-g { background: #12a812; }

.sq-r {
    margin-left: 45px;
    background: #c8302e;
}

.stat {
    height: 47px;
    display: flex;
    align-items: center;
    justify-content: space-between;
    padding: 0 2px;
    font-size: 29px;
    color: #808080;
}

.legend + .stat {
    margin-top: 6px;
}

.stat b {
    font-size: 30px;
    font-weight: 400;
    color: #e6e6e6;
}

.stat-foot {
    margin-top: 14px;
    justify-content: flex-start;
}

.info {
    width: 35px;
    height: 35px;
    margin-left: 8px;
    background: radial-gradient(circle closest-side, #3a3a3a 96%, #000);
    color: #e6e6e6;
    font-size: 26px;
    font-weight: 700;
    line-height: 35px;
    text-align: center;
}

.stat-foot em {
    margin-left: auto;
    font-style: normal;
    font-size: 30px;
    color: #666;
}

.ad {
    height: 90px;
    margin: 16px 18px 0;
    border-radius: 45px;
    background: #141d29;
    color: #3a75bd;
    font-size: 38px;
    display: flex;
    align-items: center;
    padding-left: 29px;
}

.ad-left {
    width: 400px;
    margin: -3px 0 0 19px;
    white-space: nowrap;
    -webkit-mask-image: linear-gradient(to right, transparent, #000 60px);
    mask-image: linear-gradient(to right, transparent, #000 60px);
}

.ad-right {
    width: 187px;
    margin: -3px 0 0 267px;
    white-space: nowrap;
    overflow: hidden;
    font-size: 39px;
    -webkit-mask-image: linear-gradient(to right, #000 150px, transparent 185px);
    mask-image: linear-gradient(to right, #000 150px, transparent 185px);
}

.ad-sep {
    width: 1px;
    height: 36px;
    margin: 0 15px 0 9px;
    background: #2c4a6e;
}

/* 底部标签 */
.subtabs {
    height: 105px;
    border-top: 1px solid #333;
    border-bottom: 1px solid #333;
    display: grid;
    grid-template-columns: repeat(7, 1fr);
    padding: 0 27px;
}

.subtab {
    position: relative;
    font-size: 44px;
    line-height: 108px;
    text-align: center;
    color: #808080;
}

.subtab.on {
    color: #3476c4;
}

.subtab.on::after {
    content: "";
    position: absolute;
    left: 50%;
    bottom: 8px;
    width: 60px;
    height: 6px;
    margin-left: -30px;
    border-radius: 3px;
    background: #3476c4;
}

.dock {
    height: 136px;
    margin-top: 1px;
    border-top: 1px solid #333;
    display: grid;
    grid-template-columns: 275px repeat(4, 201px);
}

.index {
    padding-top: 9px;
    display: flex;
    flex-direction: column;
    align-items: center;
}

.index-tri {
    border-left: 11px solid transparent;
    border-right: 11px solid transparent;
    border-bottom: 7px solid #8a8a8a;
}

.index-val {
    margin-top: 10px;
    font-size: 39px;
    line-height: 50px;
    color: #d81212;
}

.index-row {
    align-self: stretch;
    display: flex;
    justify-content: space-between;
    padding: 1px 13px 0 42px;
    line-height: 50px;
    font-size: 35px;
    color: #808080;
}

.index-row b {
    font-size: 36px;
    font-weight: 400;
    color: #d81212;
}

.dock-item {
    display: flex;
    flex-direction: column;
    align-items: center;
    padding-top: 9px;
    font-size: 35px;
    line-height: 40px;
    color: #808080;
}

.dock-item span {
    margin-top: 22px;
}

.yen {
    font-size: 34px;
    fill: #8a8a8a;
    text-anchor: middle;
}

.navbar {
    height: 132px;
    background: #fff;
    display: flex;
    align-items: center;
    justify-content: center;
    gap: 232px;
    padding: 0 8px 0 0;
}
```
